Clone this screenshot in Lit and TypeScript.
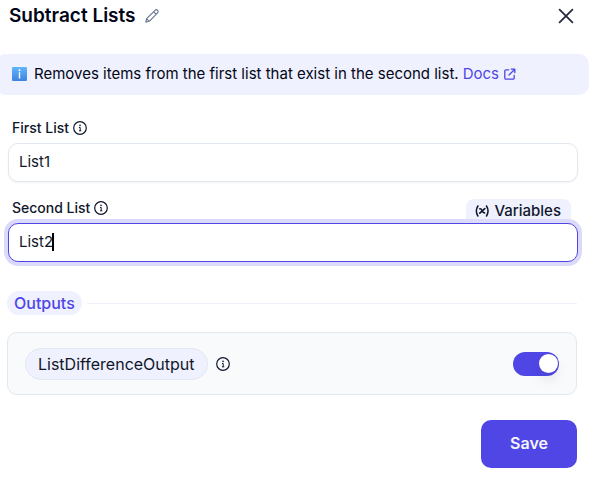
import { LitElement, html, css } from "lit";
import { customElement, state } from "lit/decorators.js";

const infoIcon = html`<svg class="info" viewBox="0 0 14 14" aria-hidden="true">
  <circle cx="7" cy="7" r="6.3" fill="none" stroke="currentColor" stroke-width="1.2" />
  <circle cx="7" cy="4.4" r="0.8" fill="currentColor" />
  <path d="M6 6.5H7.2V9.8M6 9.8H8.3" fill="none" stroke="currentColor" stroke-width="1" />
</svg>`;

@customElement("app-root")
export class AppRoot extends LitElement {
  static styles = css`
    :host {
      display: block;
      overflow: hidden;
      background: #fff;
      color: #0f172a;
      font-family: Inter, "Liberation Sans", sans-serif;
      font-size: 15px;
      line-height: 20px;
    }
    * { box-sizing: border-box; }
    svg { display: block; flex: none; }
    button, input { font: inherit; color: inherit; }
    button { border: 0; background: none; padding: 0; cursor: pointer; }
    header {
      display: flex;
      align-items: center;
      height: 54px;
      padding: 0 16px 22px 9px;
    }
    h1 { margin: 0; font-size: 19px; font-weight: 600; line-height: 24px; color: #020617; }
    .edit { margin-left: 9px; color: #64748b; }
    .edit svg { width: 14px; height: 14px; }
    .close { margin-left: auto; color: #272b40; }
    .close svg { width: 18px; height: 18px; }
    .banner {
      display: flex;
      align-items: center;
      height: 41px;
      margin: 0 2px 0 -4px;
      padding: 0 0 2px 16px;
      border-radius: 10px;
      background: #eff1ff;
      color: #020617;
      white-space: nowrap;
    }
    .banner .badge { width: 15px; height: 14px; margin-right: 7px; }
    .banner a {
      display: flex;
      align-items: center;
      margin-left: 4px;
      gap: 5px;
      color: #4f46e5;
      text-decoration: none;
    }
    .banner a svg { width: 12px; height: 12px; }
    form { padding: 24px 14px 0 7px; }
    .field { margin: 0 -1px 17px 1px; }
    .row {
      display: flex;
      align-items: center;
      height: 24px;
      padding: 0 7px 6px 4px;
    }
    .row label { font-size: 14px; font-weight: 500; line-height: 16px; margin-right: 4px; }
    .info { width: 14px; height: 14px; }
    .tab {
      display: flex;
      align-items: center;
      align-self: flex-start;
      height: 24px;
      margin-left: auto;
      padding: 0 10px 0 9px;
      gap: 5px;
      border-radius: 8px 8px 0 0;
      background: #eff1ff;
      font-weight: 500;
    }
    .tab svg { width: 14px; height: 14px; }
    .box { position: relative; }
    .box input {
      display: block;
      width: 100%;
      height: 39px;
      padding: 0 10px 2px;
      border: 1px solid #e2e8f0;
      border-radius: 10px;
      outline: 0;
      background: #fff;
      box-shadow: 0 1px 2px #0f172a0d;
      caret-color: transparent;
    }
    .box.active input { border-color: #4f46e5; box-shadow: 0 0 0 4px #dcdafa; }
    .caret {
      position: absolute;
      left: 44px;
      top: 10px;
      width: 2px;
      height: 18px;
      background: #000;
    }
    .heading {
      display: flex;
      align-items: center;
      margin-top: 29px;
      gap: 5px;
    }
    .heading::after { content: ""; flex: 1; height: 1px; background: #eff1ff; }
    h2 {
      margin: 0;
      height: 24px;
      padding: 0 7px;
      border-radius: 12px;
      background: #eff1ff;
      color: #4f46e5;
      font-size: 16px;
      font-weight: 500;
      line-height: 24px;
    }
    .card {
      display: flex;
      align-items: center;
      height: 63px;
      margin-top: 17px;
      padding: 0 17px;
      gap: 8px;
      border: 1px solid #e2e8f0;
      border-radius: 10px;
      background: #f8fafc;
    }
    .chip {
      height: 32px;
      padding: 0 12px;
      border: 1px solid #e2e8f0;
      border-radius: 16px;
      background: #eff1ff;
      font-size: 16px;
      line-height: 30px;
    }
    .toggle {
      appearance: none;
      display: flex;
      align-items: center;
      width: 46px;
      height: 24px;
      margin: 0 0 0 auto;
      padding: 0 1px;
      border-radius: 12px;
      background: #cbd5e1;
      cursor: pointer;
    }
    .toggle::before {
      content: "";
      width: 19px;
      height: 19px;
      border-radius: 50%;
      background: #fff;
      box-shadow: 0 8px 12px #0f172a14;
    }
    .toggle:checked { justify-content: flex-end; background: #4f46e5; }
    .actions { display: flex; justify-content: flex-end; margin-top: 25px; padding-bottom: 12px; }
    .save {
      width: 96px;
      height: 48px;
      padding-bottom: 2px;
      border-radius: 10px;
      background: #4f46e5;
      color: #f5f5ff;
      font-size: 16px;
      font-weight: 600;
    }
  `;

  @state() private first = "List1";
  @state() private second = "List2";
  @state() private enabled = true;

  render() {
    return html`
      <header>
        <h1>Subtract Lists</h1>
        <button class="edit" aria-label="Rename">
          <svg viewBox="0 0 14 14" fill="none" stroke="currentColor" stroke-width="1.1" stroke-linejoin="round">
            <path d="M.8 13.2 1.6 9.7 10 1.3a1.8 1.8 0 0 1 2.6 2.6L4.2 12.3ZM8.6 2.7 11.2 5.3M1.6 9.7 4.2 12.3" />
          </svg>
        </button>
        <button class="close" aria-label="Close">
          <svg viewBox="0 0 18 18" stroke="currentColor" stroke-width="1.8" stroke-linecap="round">
            <path d="M2.6 2.6 15.4 15.4M15.4 2.6 2.6 15.4" />
          </svg>
        </button>
      </header>
      <div class="banner">
        <svg class="badge" viewBox="0 0 15 14" aria-hidden="true">
          <defs>
            <linearGradient id="blue" x1="0" y1="0" x2="0" y2="1">
              <stop offset="0" stop-color="#62b5fb" />
              <stop offset="1" stop-color="#3f83e0" />
            </linearGradient>
          </defs>
          <rect width="15" height="14" rx="1" fill="url(#blue)" />
          <circle cx="7.5" cy="3.2" r="1" fill="#fff" />
          <rect x="6.8" y="5.3" width="1.4" height="6.2" fill="#fff" />
        </svg>
        <span>Removes items from the first list that exist in the second list.</span>
        <a href="#docs">Docs
          <svg viewBox="0 0 12 12" fill="none" stroke="currentColor" stroke-width="1.3" stroke-linecap="round" stroke-linejoin="round">
            <path d="M4.7 1.8H2A1.2 1.2 0 0 0 .8 3V10A1.2 1.2 0 0 0 2 11.2H9A1.2 1.2 0 0 0 10.2 10V7.3M7.3 1.2H10.8V4.7M10.8 1.2 5 7" />
          </svg>
        </a>
      </div>
      <form @submit=${(e: Event) => e.preventDefault()}>
        <div class="field">
          <div class="row"><label for="first">First List</label>${infoIcon}</div>
          <div class="box">
            <input id="first" type="text" .value=${this.first}
              @input=${(e: Event) => (this.first = (e.target as HTMLInputElement).value)} />
          </div>
        </div>
        <div class="field">
          <div class="row">
            <label for="second">Second List</label>${infoIcon}
            <button class="tab" type="button">
              <svg viewBox="0 0 14 14" fill="none" stroke="currentColor" stroke-width="1.5" stroke-linecap="round" aria-hidden="true">
                <path d="M2.9 2Q-.2 7 2.9 12M11.5 2Q14.6 7 11.5 12" />
                <path d="M4.9 4.8C7 4 7.2 9.6 9.6 8.8M9.8 4.6 4.8 9.1" stroke-width="1.7" />
              </svg>
              Variables
            </button>
          </div>
          <div class="box active">
            <input id="second" type="text" .value=${this.second}
              @input=${(e: Event) => (this.second = (e.target as HTMLInputElement).value)} />
            <span class="caret"></span>
          </div>
        </div>
        <div class="heading"><h2>Outputs</h2></div>
        <div class="card">
          <label class="chip" for="output">ListDifferenceOutput</label>
          ${infoIcon}
          <input class="toggle" id="output" type="checkbox" role="switch" .checked=${this.enabled}
            @change=${(e: Event) => (this.enabled = (e.target as HTMLInputElement).checked)} />
        </div>
        <div class="actions"><button class="save" type="submit">Save</button></div>
      </form>
    `;
  }
}
